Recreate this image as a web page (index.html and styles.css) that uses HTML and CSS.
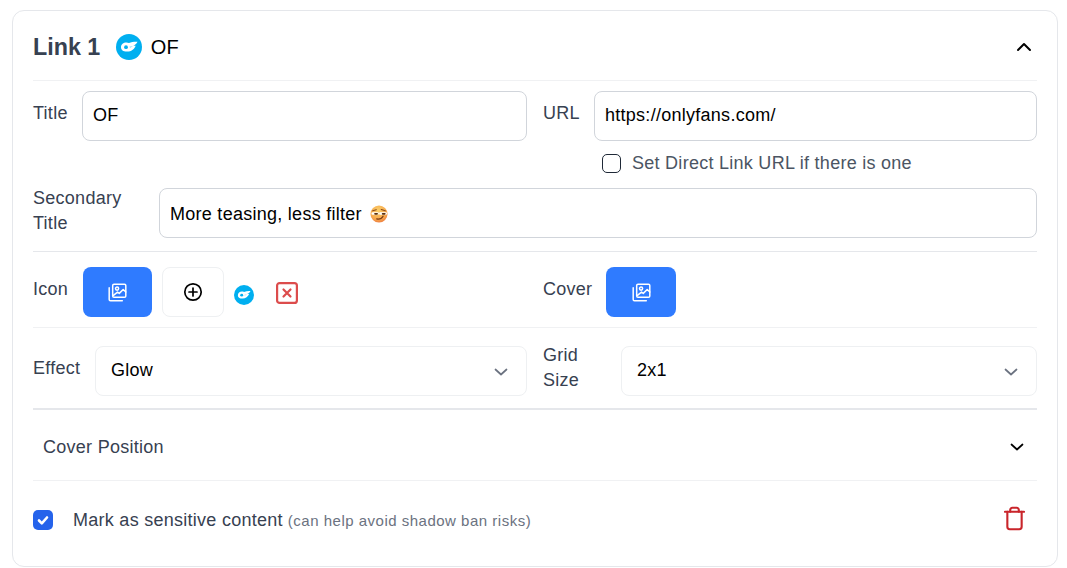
FILE: index.html
```html
<!DOCTYPE html>
<html lang="en">
<head>
<meta charset="utf-8">
<title>Link 1</title>
<link rel="stylesheet" href="styles.css">
</head>
<body>
<svg class="defs" width="0" height="0" aria-hidden="true">
  <defs>
    <symbol id="of" viewBox="0 0 26 26">
      <circle cx="13" cy="13" r="13" fill="#00aff0"/>
      <path d="M5 13.2c0-2.900 2.400-4.800 5.400-4.800 1 0 1.900.2 2.600.6 2.600-1.100 6-1.500 8.500-1.200-1 2-2.600 3.400-4.300 4 .9 0 1.700 0 2.500-.1-1.500 3.500-4.600 5.800-8.300 5.900C7.400 17.800 5 16 5 13.200z" fill="#fff"/>
      <circle cx="10" cy="13.200" r="1.900" fill="#00aff0"/>
      <path d="M13.500 12.600l3.500-.5-3 2z" fill="#9fe0fa"/>
    </symbol>
    <symbol id="pics" viewBox="0 0 24 24">
      <g fill="none" stroke="currentColor" stroke-width="1.700" stroke-linecap="round" stroke-linejoin="round">
        <rect x="6.500" y="2.500" width="15" height="15" rx="1.500"/>
        <path d="M2.500 6.500v13.500A1.500 1.500 0 0 0 4 21.500h13.500"/>
        <circle cx="11.500" cy="7.500" r="1.800"/>
        <path d="M7 15.500l5-4 2 1.500 4.500-4.500 3 3"/>
      </g>
    </symbol>
    <symbol id="chev" viewBox="0 0 14 8">
      <path d="M1.500 1.500L7 6.500l5.500-5" fill="none" stroke="currentColor" stroke-width="1.700" stroke-linecap="round" stroke-linejoin="round"/>
    </symbol>
  </defs>
</svg>
<main class="card">
  <header class="head">
    <h2 class="head-title">Link 1</h2>
    <svg class="head-icon"><use href="#of"/></svg>
    <span class="head-name">OF</span>
    <svg class="head-chev" viewBox="0 0 16 10"><path d="M2 8l6-6 6 6" fill="none" stroke="currentColor" stroke-width="2" stroke-linecap="round" stroke-linejoin="round"/></svg>
  </header>

  <section class="fields">
    <div class="two">
      <div class="field">
        <label class="label label-title">Title</label>
        <div class="input">OF</div>
      </div>
      <div class="url-col">
        <div class="field">
          <label class="label label-url">URL</label>
          <div class="input">https://onlyfans.com/</div>
        </div>
        <div class="direct">
          <span class="box"></span>
          <span class="direct-text">Set Direct Link URL if there is one</span>
        </div>
      </div>
    </div>
    <div class="field secondary">
      <label class="label label-sec">Secondary<br>Title</label>
      <div class="input">More teasing, less filter<svg class="emoji" viewBox="0 0 20 20">
          <defs><radialGradient id="face" cx=".45" cy=".3" r=".8"><stop offset="0" stop-color="#fbd06a"/><stop offset=".65" stop-color="#f6a64c"/><stop offset="1" stop-color="#e96a3a"/></radialGradient></defs>
          <circle cx="10" cy="10" r="9.500" fill="url(#face)"/>
          <path d="M3 6.500l4-1.300M12.500 5l4.500 1.500" stroke="#8a4a1c" stroke-width="1.200" stroke-linecap="round" fill="none"/>
          <path d="M3 9.500h5.500M11.500 9.500h6" stroke="#fff" stroke-width="2.800" stroke-linecap="round"/>
          <path d="M5.500 9.800h2.500M14 9.800h2.500" stroke="#5a3212" stroke-width="1.800" stroke-linecap="round"/>
          <path d="M7.500 15.500c3 .6 5.500-.4 7-3" fill="none" stroke="#7a3a14" stroke-width="1.400" stroke-linecap="round"/>
        </svg></div>
    </div>
  </section>

  <section class="two media">
    <div class="media-col">
      <span class="label label-icon">Icon</span>
      <button class="upload"><svg class="pics"><use href="#pics"/></svg></button>
      <button class="add">
        <svg class="plus" viewBox="0 0 20 20"><g fill="none" stroke="#000" stroke-width="1.700" stroke-linecap="round"><circle cx="10" cy="10" r="8.200"/><path d="M10 6v8M6 10h8"/></g></svg>
      </button>
      <svg class="thumb"><use href="#of"/></svg>
      <svg class="remove" viewBox="0 0 22 22"><g fill="none" stroke="#dc4c4c" stroke-width="2.200" stroke-linecap="round"><rect x="1.100" y="1.100" width="19.800" height="19.800" rx="2.500"/><path d="M7.500 7.500l7 7M14.500 7.500l-7 7"/></g></svg>
    </div>
    <div class="media-col">
      <span class="label label-cover">Cover</span>
      <button class="upload upload-cover"><svg class="pics"><use href="#pics"/></svg></button>
    </div>
  </section>

  <section class="two selects">
    <div class="select-col">
      <label class="label label-effect">Effect</label>
      <div class="select">Glow<svg class="select-chev"><use href="#chev"/></svg></div>
    </div>
    <div class="select-col">
      <label class="label label-grid">Grid<br>Size</label>
      <div class="select">2x1<svg class="select-chev"><use href="#chev"/></svg></div>
    </div>
  </section>

  <section class="position">
    <span>Cover Position</span>
    <svg class="pos-chev"><use href="#chev"/></svg>
  </section>

  <footer class="foot">
    <span class="checked"><svg viewBox="0 0 20 20" class="tick"><path d="M6 10.500l2.800 2.800L14 7.500" fill="none" stroke="#fff" stroke-width="2.600" stroke-linecap="round" stroke-linejoin="round"/></svg></span>
    <span class="foot-text">Mark as sensitive content</span>
    <span class="foot-note">(can help avoid shadow ban risks)</span>
    <svg class="trash" viewBox="0 0 22 25"><g fill="none" stroke="#c9252b" stroke-width="2.200" stroke-linecap="round" stroke-linejoin="round"><path d="M1 5.500h20"/><path d="M6.500 5.500V3.500a2.200 2.200 0 0 1 2.200-2.200h4.600a2.200 2.200 0 0 1 2.200 2.200v2"/><path d="M3.500 5.500v15.700a2.500 2.500 0 0 0 2.500 2.500h10a2.500 2.500 0 0 0 2.500-2.500V5.500"/></g></svg>
  </footer>
</main>
</body>
</html>
```
FILE: styles.css
```css
* { box-sizing: border-box; }
html, body { margin: 0; padding: 0; background: #fff; }
body {
  width: 1067px;
  height: 568px;
  overflow: hidden;
  padding: 10px 9px 0 12px;
  font-family: "Liberation Sans", Arial, sans-serif;
  font-size: 18px;
  letter-spacing: .27px;
  color: #000;
}
.defs { display: block; height: 0; }
button { font: inherit; padding: 0; cursor: pointer; }

.card {
  width: 1046px;
  height: 557px;
  border: 1px solid #e5e7eb;
  border-radius: 12px;
  padding: 0 20px;
  background: #fff;
}

.head {
  display: flex;
  align-items: center;
  height: 70px;
  padding-top: 2px;
  border-bottom: 1px solid #f0f1f3;
}
.head-title { margin: 0; font-size: 23.300px; font-weight: 700; color: #374151; line-height: 32px; letter-spacing: 0; }
.head-icon { width: 26px; height: 26px; margin: 0 9px 0 15.500px; }
.head-name { font-size: 20px; line-height: 28px; letter-spacing: 0; }
.head-chev { width: 16px; height: 10px; margin-left: auto; margin-right: 5px; color: #000; }

.two { display: grid; grid-template-columns: 494px 494px; column-gap: 16px; }
.label { font-size: 18px; line-height: 25px; color: #374151; }

.fields { padding-top: 10px; height: 171px; border-bottom: 1px solid #e5e7eb; }
.field { display: flex; align-items: flex-start; }
.label-title { width: 49px; padding-top: 10px; }
.label-url { width: 51px; padding-top: 10px; }
.label-sec { width: 126px; margin-top: -2px; }
.input {
  flex: 1;
  height: 50px;
  padding: 0 10px;
  border: 1px solid #d1d5db;
  border-radius: 8px;
  font-size: 18px;
  line-height: 47px;
  color: #000;
}
.direct { display: flex; align-items: center; margin: 11px 0 0 59px; height: 22px; }
.box { width: 19px; height: 19px; border: 1.500px solid #1f2937; border-radius: 5px; margin-right: 11px; }
.direct-text { color: #4b5563; font-size: 18px; }
.secondary { margin-top: 14px; }
.secondary .input { line-height: 51px; }
.emoji { width: 18px; height: 18px; margin-left: 8px; vertical-align: -3px; }

.media { height: 76px; border-bottom: 1px solid #f0f1f3; padding-top: 15px; }
.media-col { display: flex; align-items: flex-start; }
.upload {
  width: 69px;
  height: 50px;
  border: 0;
  border-radius: 8px;
  background: #2f7bff;
  color: #fff;
  display: flex;
  align-items: center;
  justify-content: center;
}
.upload-cover { width: 70px; }
.pics { width: 21px; height: 21px; }
.label-icon { width: 50px; padding-top: 10px; }
.label-cover { width: 63px; padding-top: 10px; }
.add {
  width: 62px;
  height: 50px;
  margin-left: 10px;
  background: #fff;
  border: 1px solid #eef0f2;
  border-radius: 8px;
  display: flex;
  align-items: center;
  justify-content: center;
}
.plus { width: 20px; height: 20px; }
.thumb { width: 20px; height: 20px; margin: 18px 0 0 10px; }
.remove { width: 22px; height: 22px; margin: 15px 0 0 22px; }

.selects { height: 82px; border-bottom: 2px solid #e5e7eb; padding-top: 18px; }
.select-col { display: flex; align-items: flex-start; }
.label-effect { width: 62px; padding-top: 10px; }
.label-grid { width: 78px; margin-top: -3px; }
.select {
  flex: 1;
  display: flex;
  align-items: center;
  justify-content: space-between;
  height: 50px;
  padding: 0 18px 2px 15px;
  border: 1px solid #eef0f2;
  border-radius: 8px;
  font-size: 18px;
}
.select-chev { width: 14px; height: 8px; margin-top: 3px; color: #6b7280; }

.position {
  display: flex;
  align-items: center;
  justify-content: space-between;
  height: 71px;
  padding: 4px 13px 0 10px;
  border-bottom: 1px solid #f0f1f3;
  font-size: 18px;
  color: #374151;
}
.pos-chev { width: 14px; height: 8px; color: #000; }

.foot { display: flex; align-items: center; height: 77px; padding-top: 1px; font-size: 18px; }
.checked {
  width: 20px;
  height: 20px;
  border-radius: 5px;
  background: #2563eb;
  margin-right: 20px;
  display: flex;
}
.tick { width: 20px; height: 20px; }
.foot-text { color: #374151; }
.foot-note { color: #6b7280; font-size: 15px; margin-left: 5px; letter-spacing: .5px; }
.trash { width: 21px; height: 25px; margin-left: auto; margin-right: 12px; margin-top: -3px; }
```
